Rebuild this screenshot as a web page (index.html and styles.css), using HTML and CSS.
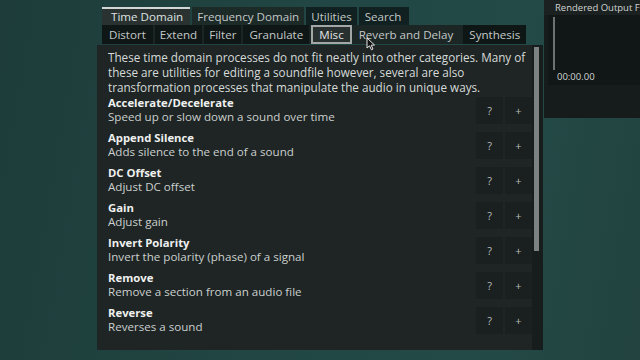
FILE: index.html
```html
<!DOCTYPE html>
<html lang="en">

<head>
    <meta charset="UTF-8">
    <meta name="viewport" content="width=device-width, initial-scale=1.0">
    <title>Process Browser</title>
    <link rel="stylesheet" href="styles.css">
</head>

<body>
    <div class="stage">
        <!-- Process browser -->
        <section class="browser">
            <nav class="tabs">
                <span class="tab active">Time Domain</span>
                <span class="tab">Frequency Domain</span>
                <span class="tab dark">Utilities</span>
                <span class="tab dark">Search</span>
            </nav>
            <nav class="subtabs">
                <span class="subtab">Distort</span>
                <span class="subtab narrow">Extend</span>
                <span class="subtab narrow">Filter</span>
                <span class="subtab">Granulate</span>
                <span class="subtab selected">Misc</span>
                <span class="subtab hover">Reverb and Delay</span>
                <span class="subtab">Synthesis</span>
            </nav>

            <div class="panel">
                <div class="content">
                    <p class="intro">These time domain processes do not fit neatly into other categories. Many of
                        these are utilities for editing a soundfile however, several are also
                        transformation processes that manipulate the audio in unique ways.</p>

                    <div class="item">
                        <div class="info">
                            <div class="name">Accelerate/Decelerate</div>
                            <div class="desc">Speed up or slow down a sound over time</div>
                        </div>
                        <div class="actions"><button>?</button><button>+</button></div>
                    </div>
                    <div class="item">
                        <div class="info">
                            <div class="name">Append Silence</div>
                            <div class="desc">Adds silence to the end of a sound</div>
                        </div>
                        <div class="actions"><button>?</button><button>+</button></div>
                    </div>
                    <div class="item">
                        <div class="info">
                            <div class="name">DC Offset</div>
                            <div class="desc">Adjust DC offset</div>
                        </div>
                        <div class="actions"><button>?</button><button>+</button></div>
                    </div>
                    <div class="item">
                        <div class="info">
                            <div class="name">Gain</div>
                            <div class="desc">Adjust gain</div>
                        </div>
                        <div class="actions"><button>?</button><button>+</button></div>
                    </div>
                    <div class="item">
                        <div class="info">
                            <div class="name">Invert Polarity</div>
                            <div class="desc">Invert the polarity (phase) of a signal</div>
                        </div>
                        <div class="actions"><button>?</button><button>+</button></div>
                    </div>
                    <div class="item">
                        <div class="info">
                            <div class="name">Remove</div>
                            <div class="desc">Remove a section from an audio file</div>
                        </div>
                        <div class="actions"><button>?</button><button>+</button></div>
                    </div>
                    <div class="item">
                        <div class="info">
                            <div class="name">Reverse</div>
                            <div class="desc">Reverses a sound</div>
                        </div>
                        <div class="actions"><button>?</button><button>+</button></div>
                    </div>
                </div>

                <div class="scrollbar"><div class="thumb"></div></div>
            </div>
        </section>

        <!-- Output preview -->
        <aside class="output">
            <div class="output-title">Rendered Output File</div>
            <div class="wave">
                <div class="playhead"></div>
                <div class="time">00:00.00</div>
            </div>
        </aside>
    </div>

    <!-- mouse pointer -->
    <svg class="cursor" width="10" height="14" viewBox="0 0 10 14">
        <path d="M1 1 L1 11 L3.5 8.8 L5.4 12.8 L7 12 L5.2 8.2 L8.5 8 Z" fill="#111" stroke="#e8e8e8" stroke-width="1" />
    </svg>
</body>

</html>
```

FILE: styles.css
```css
body {
    margin: 0;
    width: 640px;
    height: 360px;
    overflow: hidden;
    font-family: 'Open Sans', sans-serif;
    background: linear-gradient(100deg, #1d3c3a 0%, #214643 45%, #234a47 75%, #22433f 100%);
    color: #d4d8d7;
    position: relative;
}

.stage {
    display: flex;
    height: 360px;
}

/* Process browser */
.browser {
    margin-left: 97px;
    width: 446px;
    flex-shrink: 0;
    display: flex;
    flex-direction: column;
}

.tabs {
    display: flex;
    gap: 2px;
    padding: 7px 0 0 5px;
    height: 18px;
}

.tab {
    font-size: 11.6px;
    line-height: 17px;
    padding: 0 5px;
    color: #c3c8c7;
    background-color: #1c2a28;
    border-top: 1px solid transparent;
}

.tab:last-child {
    padding: 0 8px 0 6px;
}

.tab.active {
    background-color: #2a3231;
    border-top: 2px solid #d2d6d5;
    line-height: 16px;
    padding: 0 7px 0 9px;
    color: #dfe3e2;
}

.tab.dark {
    background-color: #112020;
}

.subtabs {
    display: flex;
    align-self: flex-start;
    gap: 2px;
    margin-left: 5px;
    height: 19px;
    background-color: #1a2625;
}

.subtab {
    font-size: 11.6px;
    line-height: 19px;
    padding: 0 6px;
    color: #c3c8c7;
    background-color: #0f1716;
}

.subtab:first-child {
    padding: 0 7px;
}

.subtab.narrow {
    padding: 0 5px;
}

.subtab.selected {
    background-color: #283030;
    border: 2px solid #a3a8a7;
    line-height: 15px;
    padding: 0 6px;
    color: #e2e5e4;
}

.subtab.hover {
    background-color: #1c2625;
    padding: 0 8px 0 5px;
}

.panel {
    margin-top: 1px;
    height: 305px;
    display: flex;
    background-color: #1e2524;
}

.content {
    flex: 1;
    padding: 5px 0 0 11px;
}

.intro {
    margin: 0 0 2px;
    font-size: 11.7px;
    line-height: 15px;
    color: #d6dad9;
}

.item {
    display: flex;
    height: 27px;
    margin-bottom: 8px;
}

.info {
    flex: 1;
    margin-top: -1px;
}

.name {
    font-size: 11.3px;
    font-weight: 700;
    line-height: 14px;
    color: #eef0ef;
}

.desc {
    font-size: 11.6px;
    line-height: 14px;
    color: #cbcfce;
}

.actions {
    display: flex;
    gap: 2px;
}

button {
    width: 27px;
    height: 27px;
    border: none;
    padding: 0;
    background-color: #1a201f;
    color: #b8bdbc;
    font-family: 'Open Sans', sans-serif;
    font-size: 11px;
}

.scrollbar {
    width: 11px;
    padding: 2px 0 0 2px;
    box-sizing: border-box;
    background-color: #171d1c;
}

.thumb {
    width: 5px;
    height: 204px;
    background-color: #7c8281;
}

/* Output preview */
.output {
    margin-left: 1px;
    width: 96px;
    flex-shrink: 0;
    height: 118px;
    overflow: hidden;
    background-color: #161c1b;
}

.output-title {
    font-size: 9.5px;
    line-height: 15px;
    padding-left: 11px;
    white-space: nowrap;
    color: #d0d4d3;
    background-color: #1b2120;
}

.wave {
    position: relative;
    height: 70px;
    margin-left: 4px;
    background-color: #111716;
}

.playhead {
    position: absolute;
    left: 5px;
    top: 2px;
    width: 2px;
    height: 53px;
    background-color: #6c7271;
}

.time {
    position: absolute;
    left: 9px;
    top: 55px;
    font-size: 9.5px;
    color: #d0d4d3;
}

.cursor {
    position: absolute;
    left: 366px;
    top: 37px;
}
```
